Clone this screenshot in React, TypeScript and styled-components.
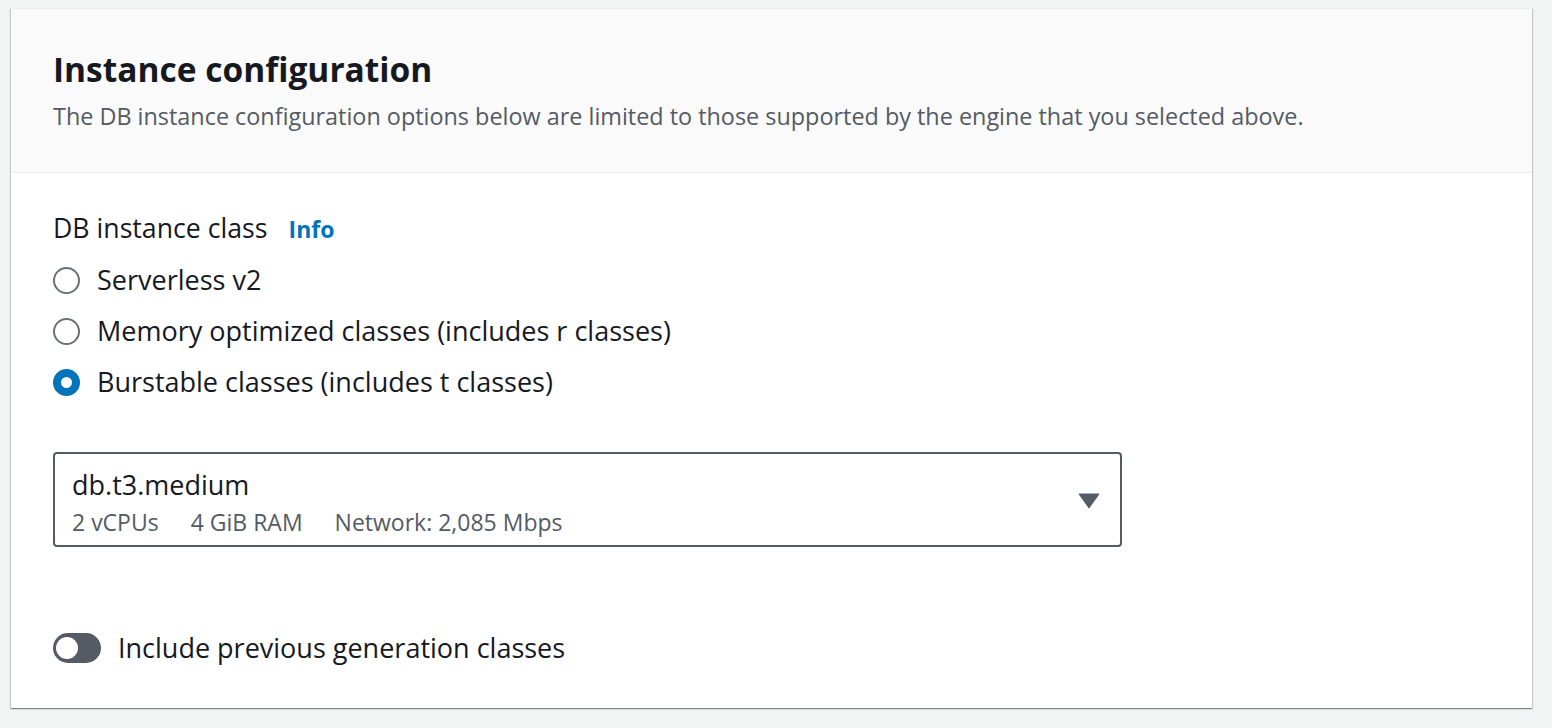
import React from 'react'
import styled, { createGlobalStyle } from 'styled-components'

const GlobalStyle = createGlobalStyle`
  html, body {
    margin: 0;
    padding: 0;
    background: #f2f3f3;
  }
  body {
    font-family: 'Open Sans', 'Noto Sans', sans-serif;
    color: #16191f;
  }
`

const Page = styled.div`
  height: 728px;
  padding: 8px 20px 0 11px;
  box-sizing: border-box;
`

const Card = styled.section`
  width: 1521px;
  background: #ffffff;
  border-top: 1px solid #eaeded;
  box-shadow: 0 1px 1px 0 rgba(0, 28, 36, 0.3), 1px 1px 1px 0 rgba(0, 28, 36, 0.15),
    -1px 1px 1px 0 rgba(0, 28, 36, 0.15);
`

const Header = styled.header`
  background: #fafafa;
  border-bottom: 1px solid #eaeded;
  padding: 38px 42px 40px;
`

const Title = styled.h2`
  margin: 0;
  font-size: 33.5px;
  line-height: 44px;
  font-weight: 700;
  color: #16191f;
`

const Description = styled.p`
  margin: 9px 0 0;
  font-size: 23.4px;
  line-height: 32px;
  color: #545b64;
`

const Body = styled.div`
  padding: 38px 42px 43px;
  display: flex;
  flex-direction: column;
`

const Label = styled.div`
  display: flex;
  align-items: baseline;
  gap: 21px;
  font-size: 26.7px;
  line-height: 34px;
`

const InfoLink = styled.a`
  color: #0073bb;
  font-weight: 700;
  font-size: 23px;
  text-decoration: none;
`

const RadioGroup = styled.div`
  display: flex;
  flex-direction: column;
  gap: 17px;
  margin-top: 17px;
`

const RadioRow = styled.label`
  display: flex;
  align-items: center;
  gap: 17px;
  font-size: 27px;
  line-height: 34px;
`

const RadioCircle = styled.span<{ $checked?: boolean }>`
  width: 27px;
  height: 27px;
  border-radius: 50%;
  box-sizing: border-box;
  background: #ffffff;
  border: ${(p) => (p.$checked ? '8px solid #0073bb' : '2px solid #687078')};
  flex-shrink: 0;
`

const Select = styled.div`
  margin-top: 53px;
  width: 1069px;
  height: 95px;
  box-sizing: border-box;
  border: 2px solid #545b64;
  border-radius: 4px;
  padding: 12px 20px 0 17px;
  display: flex;
  align-items: center;
  justify-content: space-between;
`

const SelectText = styled.div`
  display: flex;
  flex-direction: column;
  margin-top: -6px;
`

const SelectValue = styled.div`
  font-size: 27px;
  line-height: 34px;
`

const SelectTags = styled.div`
  display: flex;
  gap: 32px;
  margin-top: 4px;
  font-size: 23px;
  line-height: 32px;
  color: #545b64;
`

const Caret = styled.svg`
  width: 22px;
  height: 16px;
  margin-top: -10px;
`

const ToggleRow = styled.label`
  margin-top: 84px;
  display: flex;
  align-items: center;
  gap: 17px;
  font-size: 27px;
  line-height: 34px;
`

const ToggleTrack = styled.span`
  width: 48px;
  height: 30px;
  border-radius: 15px;
  background: #545b64;
  display: flex;
  align-items: center;
  padding: 0 3px;
  box-sizing: border-box;
`

const ToggleKnob = styled.span`
  width: 22px;
  height: 22px;
  border-radius: 50%;
  background: #ffffff;
`

const options = [
  { label: 'Serverless v2', checked: false },
  { label: 'Memory optimized classes (includes r classes)', checked: false },
  { label: 'Burstable classes (includes t classes)', checked: true },
]

export default function App() {
  return (
    <>
      <GlobalStyle />
      <Page>
        <Card>
          <Header>
            <Title>Instance configuration</Title>
            <Description>
              The DB instance configuration options below are limited to those supported by the
              engine that you selected above.
            </Description>
          </Header>
          <Body>
            <Label>
              DB instance class <InfoLink href="#">Info</InfoLink>
            </Label>
            <RadioGroup>
              {options.map((o) => (
                <RadioRow key={o.label}>
                  <RadioCircle $checked={o.checked} />
                  {o.label}
                </RadioRow>
              ))}
            </RadioGroup>
            <Select>
              <SelectText>
                <SelectValue>db.t3.medium</SelectValue>
                <SelectTags>
                  <span>2 vCPUs</span>
                  <span>4 GiB RAM</span>
                  <span>Network: 2,085 Mbps</span>
                </SelectTags>
              </SelectText>
              <Caret viewBox="0 0 22 16">
                <path d="M1 1 H21 L11 15 Z" fill="#545b64" stroke="#545b64" strokeLinejoin="round" />
              </Caret>
            </Select>
            <ToggleRow>
              <ToggleTrack>
                <ToggleKnob />
              </ToggleTrack>
              Include previous generation classes
            </ToggleRow>
          </Body>
        </Card>
      </Page>
    </>
  )
}
